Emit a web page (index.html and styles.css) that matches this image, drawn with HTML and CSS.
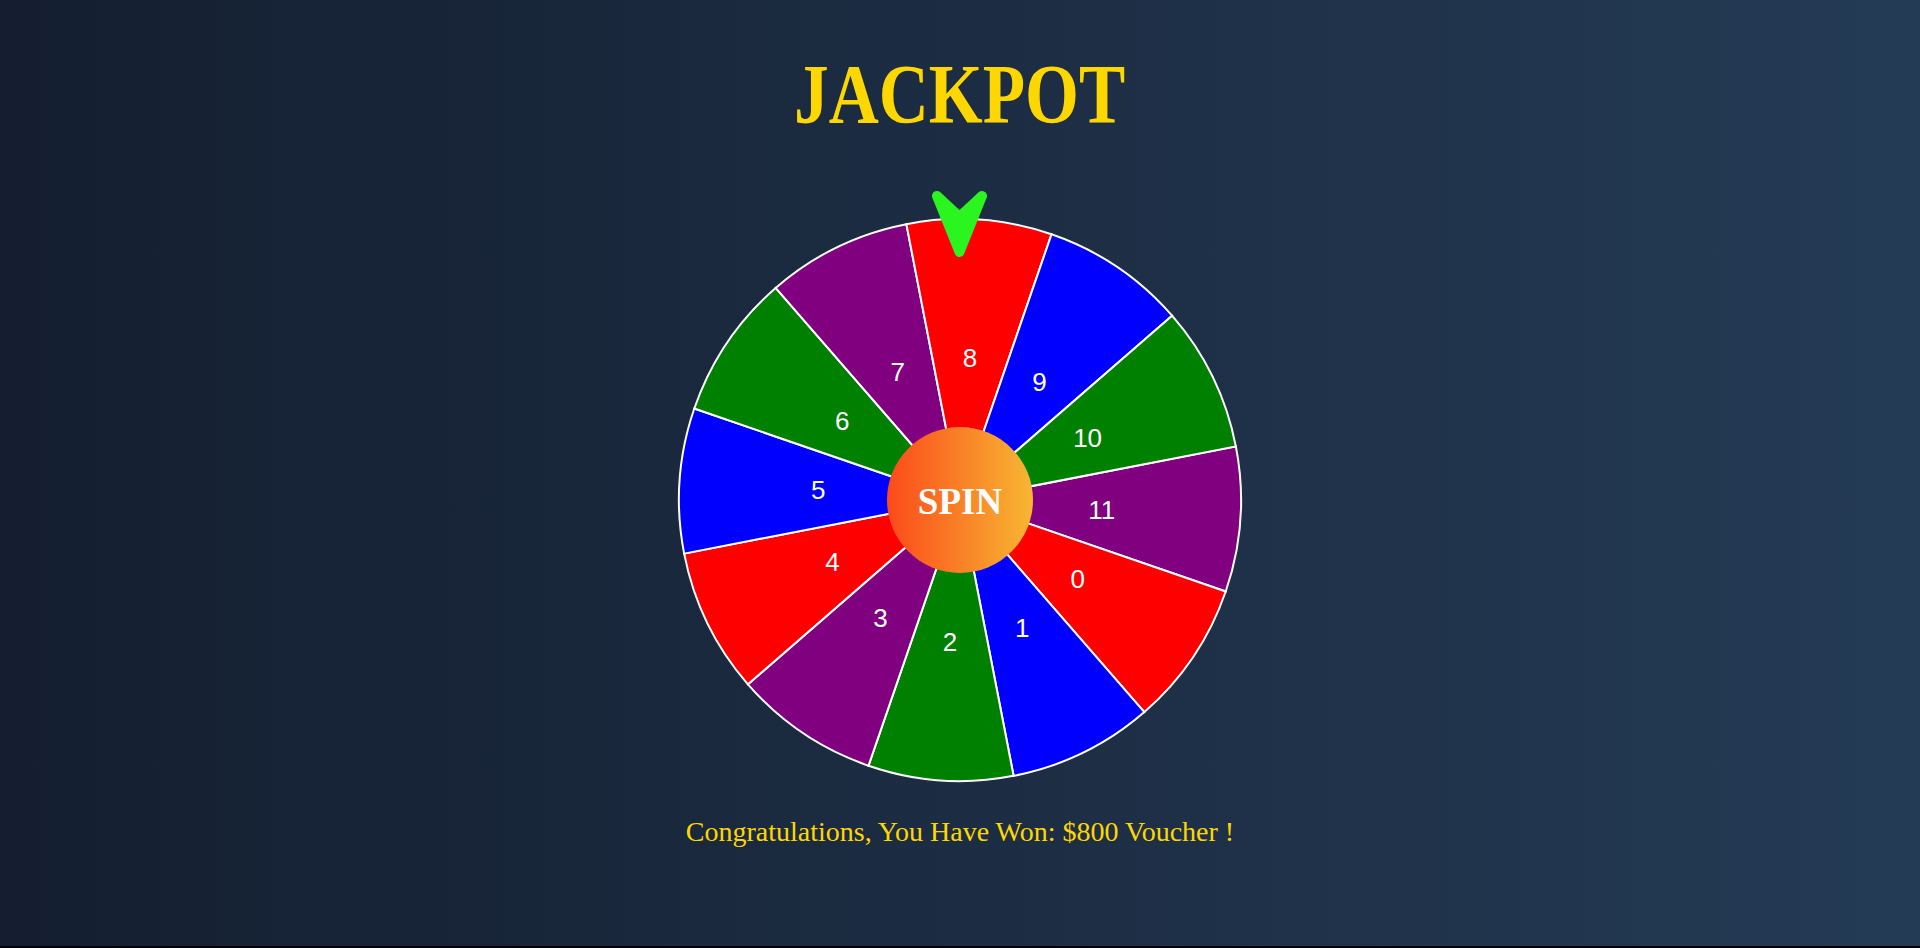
FILE: index.html
```html
<!DOCTYPE html>
<html lang="en">
<head>
<meta charset="utf-8">
<title>Jackpot</title>
<link rel="stylesheet" href="styles.css">
</head>
<body>
<main class="page">
  <h1 class="title">JACKPOT</h1>
  <div class="wheel">
    <svg class="wheel-svg" width="570" height="570" viewBox="0 0 570 570">
      <g class="segments">
        <path d="M285,285 L560.84,231.38 A281,281 0 0 1 550.69,376.49 Z" fill="#800080"/>
        <path d="M285,285 L550.69,376.49 A281,281 0 0 1 469.35,497.07 Z" fill="#ff0000"/>
        <path d="M285,285 L469.35,497.07 A281,281 0 0 1 338.62,560.84 Z" fill="#0000ff"/>
        <path d="M285,285 L338.62,560.84 A281,281 0 0 1 193.51,550.69 Z" fill="#008000"/>
        <path d="M285,285 L193.51,550.69 A281,281 0 0 1 72.93,469.35 Z" fill="#800080"/>
        <path d="M285,285 L72.93,469.35 A281,281 0 0 1 9.16,338.62 Z" fill="#ff0000"/>
        <path d="M285,285 L9.16,338.62 A281,281 0 0 1 19.31,193.51 Z" fill="#0000ff"/>
        <path d="M285,285 L19.31,193.51 A281,281 0 0 1 100.65,72.93 Z" fill="#008000"/>
        <path d="M285,285 L100.65,72.93 A281,281 0 0 1 231.38,9.16 Z" fill="#800080"/>
        <path d="M285,285 L231.38,9.16 A281,281 0 0 1 376.49,19.31 Z" fill="#ff0000"/>
        <path d="M285,285 L376.49,19.31 A281,281 0 0 1 497.07,100.65 Z" fill="#0000ff"/>
        <path d="M285,285 L497.07,100.65 A281,281 0 0 1 560.84,231.38 Z" fill="#008000"/>
      </g>
      <g class="labels">
        <text x="426.65" y="294.91">11</text>
        <text x="402.72" y="364.41">0</text>
        <text x="347.25" y="412.63">1</text>
        <text x="275.09" y="426.65">2</text>
        <text x="205.59" y="402.72">3</text>
        <text x="157.37" y="347.25">4</text>
        <text x="143.35" y="275.09">5</text>
        <text x="167.28" y="205.59">6</text>
        <text x="222.75" y="157.37">7</text>
        <text x="294.91" y="143.35">8</text>
        <text x="364.41" y="167.28">9</text>
        <text x="412.63" y="222.75">10</text>
      </g>
    </svg>
    <svg class="pointer" width="570" height="80" viewBox="0 -30 570 80">
      <path d="M262,-19 L284.5,2 L307,-19 L284.5,37 Z"/>
    </svg>
    <button class="spin" type="button">SPIN</button>
  </div>
  <p class="result">Congratulations, You Have Won: $800 Voucher !</p>
</main>
</body>
</html>
```

FILE: styles.css
```css
html {
  background: #000;
  margin: 0;
  padding: 0;
}

body {
  margin: 0;
  height: 946px;
  background: linear-gradient(to right, #141e30, #243b55);
  overflow: hidden;
}

.page {
  display: flex;
  flex-direction: column;
  align-items: center;
}

.title {
  margin: 53px 0 0;
  font-family: "Liberation Serif", "Times New Roman", serif;
  font-weight: bold;
  font-size: 84px;
  line-height: 84px;
  color: #ffd700;
  transform: scaleX(0.825);
}

.wheel {
  position: relative;
  width: 570px;
  height: 570px;
  margin-top: 78px;
}

.wheel-svg {
  display: block;
}

.segments path {
  stroke: #ffffff;
  stroke-width: 2;
}

.labels text {
  font-family: "Liberation Sans", Arial, sans-serif;
  font-size: 26px;
  fill: #ffffff;
  text-anchor: middle;
  dominant-baseline: central;
}

.pointer {
  position: absolute;
  left: 0;
  top: -30px;
  overflow: visible;
}

.pointer path {
  fill: #2af51e;
  stroke: #2af51e;
  stroke-width: 10;
  stroke-linejoin: round;
}

.spin {
  position: absolute;
  left: 212px;
  top: 212px;
  width: 146px;
  height: 146px;
  border: none;
  border-radius: 50%;
  padding: 3px 0 0;
  background: linear-gradient(to right, #fc4a1a, #f7b733);
  color: #ffffff;
  font-family: "Liberation Serif", "Times New Roman", serif;
  font-weight: bold;
  font-size: 37px;
  cursor: pointer;
}

.result {
  margin: 33px 0 0;
  font-family: "Liberation Serif", "Times New Roman", serif;
  font-size: 28px;
  line-height: 28px;
  color: #ffd700;
}
```
